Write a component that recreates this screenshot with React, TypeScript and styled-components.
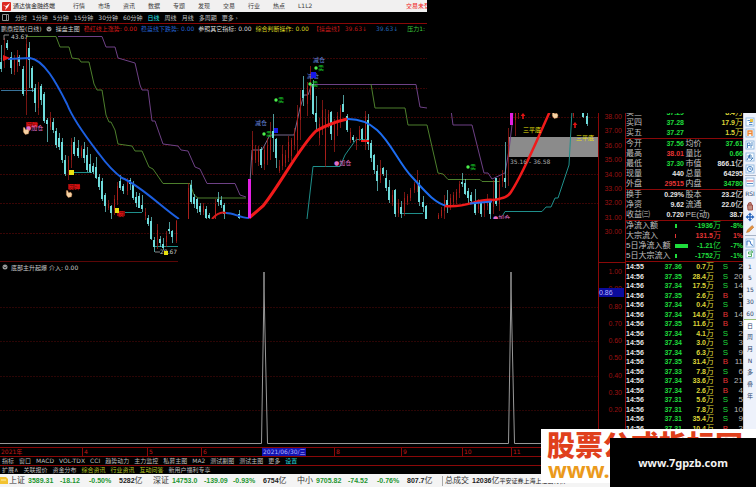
import React from 'react';
import styled, { createGlobalStyle, css } from 'styled-components';

const RED = '#e43434';
const GREEN = '#1fdc3c';
const LINE = '#8a0808';
const CJK = '"Noto Sans CJK SC", sans-serif';

const GlobalStyle = createGlobalStyle`
  * { box-sizing: border-box; }
  html, body { margin: 0; padding: 0; background: #000; }
  body { font-family: "DejaVu Sans", ${CJK}; font-size: 6px; color: #c8c8c8; }
  button, a { font: inherit; color: inherit; text-decoration: none; }
  button { background: none; border: 0; padding: 0; margin: 0; cursor: pointer; white-space: nowrap; }
  h1 { margin: 0; font: inherit; }
  svg { display: block; }
`;

const Page = styled.div`
  position: relative;
  min-height: 100vh;
  display: flex;
  flex-direction: column;
  overflow: hidden;
`;

const Workspace = styled.div`
  flex: 1;
  display: grid;
  grid-template-columns: minmax(0, 1fr) 118px 13px;
`;

const ChartColumn = styled.main`
  display: flex;
  flex-direction: column;
  min-width: 0;
`;

const TitleBar = styled.header`
  height: 12px;
  display: flex;
  align-items: center;
  background: #f1f0f0;
  color: #3c3c3c;
  padding-left: 2px;
  line-height: 12px;
  white-space: nowrap;
`;

const AppName = styled.h1`
  width: 58px;
  margin-left: 2px;
  color: #222;
`;

const Menu = styled.nav`
  display: grid;
  grid-template-columns: repeat(10, 25px);
  padding-left: 2px;
  width: 335px;
  justify-items: start;
`;

const Alert = styled.button`
  && { color: #f01818; }
`;

const PeriodBar = styled.nav`
  height: 12px;
  display: flex;
  align-items: center;
  gap: 5px;
  padding-left: 2px;
  border-bottom: 1px solid ${LINE};
  line-height: 11px;
  white-space: nowrap;
`;

const PeriodButton = styled.button<{ $active?: boolean }>`
  && { color: ${p => (p.$active ? '#25e6ee' : '#c2c2c2')}; }
`;

const Legend = styled.div<{ $tall?: boolean }>`
  height: ${p => (p.$tall ? 10 : 9)}px;
  display: flex;
  align-items: center;
  gap: ${p => (p.$tall ? 3 : 4)}px;
  padding-left: ${p => (p.$tall ? 2 : 1)}px;
  line-height: 9px;
  white-space: nowrap;
  overflow: hidden;
`;

const LegendItem = styled.span<{ $color?: string; $wide?: boolean }>`
  color: ${p => p.$color || '#c8c8c8'};
  padding-right: ${p => (p.$wide ? 5 : 0)}px;
`;

const PlotRow = styled.section`
  display: grid;
  grid-template-columns: minmax(0, 1fr) 27px;
`;

const IndicatorRow = styled(PlotRow)`
  flex: 1;
`;

const IndicatorPlot = styled.div`
  min-width: 0;
`;

const Axis = styled.div<{ $lower?: boolean }>`
  position: relative;
  display: flex;
  flex-direction: column;
  justify-content: space-between;
  align-items: flex-end;
  padding: ${p => (p.$lower ? '5px 3px 33px 0' : '80px 3px 26px 0')};
  border-left: 1px solid ${LINE};
  ${p => p.$lower && css`border-top: 1px solid ${LINE};`}
  font-family: "Liberation Sans", sans-serif;
  font-size: 7px;
  line-height: 8px;
  color: #9c1212;
`;

const AxisTag = styled.span`
  position: absolute;
  left: 0;
  right: 1px;
  top: 25px;
  height: 9px;
  line-height: 9px;
  background: #0b0b9c;
  color: #b8b8ff;
`;

const TimeAxis = styled.div`
  height: 9px;
  border-top: 1px solid ${LINE};
  display: grid;
  grid-template-columns: 82fr 65fr 54fr 61fr 72fr 67fr 61fr 49fr 114fr;
  line-height: 8px;
  color: #c41818;
  white-space: nowrap;
`;

const TimeMark = styled.span<{ $current?: boolean; $first?: boolean }>`
  justify-self: start;
  padding-left: 1px;
  ${p => !p.$current && !p.$first && css`border-left: 1px solid ${LINE};`}
  ${p => p.$current && css`background: #1212b0; color: #b4b4ff;`}
`;

const TabBar = styled.nav`
  height: 9px;
  display: flex;
  gap: 5px;
  padding-left: 2px;
  border-top: 1px solid ${LINE};
  line-height: 8px;
`;

const Tab = styled.button<{ $color?: string }>`
  && { color: ${p => p.$color || '#bdbdbd'}; line-height: 8px; }
`;

const QuotePanel = styled.aside`
  border-left: 1px solid ${LINE};
  padding-top: 108px;
  font-family: "Liberation Sans", ${CJK};
  font-size: 8px;
`;

const QuoteTable = styled.table<{ $ticks?: boolean }>`
  width: 100%;
  height: ${p => (p.$ticks ? '171px' : 'auto')};
  table-layout: fixed;
  border-collapse: collapse;
  border-bottom: ${p => (p.$ticks ? '0' : `1px solid ${LINE}`)};
  line-height: ${p => (p.$ticks ? 9 : 10)}px;
  white-space: nowrap;
  td, th { padding: 0; font-weight: normal; overflow: visible; }
`;

const Label = styled.th`
  text-align: left;
  color: #c0c0c0;
`;

const Value = styled.td<{ $color?: string; $left?: boolean }>`
  text-align: ${p => (p.$left ? 'left' : 'right')};
  color: ${p => p.$color || '#e4e4e4'};
`;

const Num = styled.b`
  font-size: 7px;
`;

const Col = styled.col<{ $w?: number }>`
  ${p => p.$w && css`width: ${p.$w}px;`}
`;

const FlowBar = styled.i<{ $w: number; $color: string }>`
  display: block;
  width: ${p => p.$w}px;
  height: 4px;
  background: ${p => p.$color};
`;

const ToolStrip = styled.nav`
  background: #eef2fb;
  border-left: 1px solid #c9d2e2;
  padding-top: 116px;
`;

const ToolList = styled.div`
  height: 285px;
  display: flex;
  flex-direction: column;
  justify-content: space-between;
`;

const Tool = styled.button<{ $active?: boolean }>`
  && {
    height: 11px;
    width: 100%;
    display: flex;
    align-items: center;
    justify-content: center;
    line-height: 11px;
    color: #2c466e;
    background: ${p => (p.$active ? '#fff' : 'transparent')};
    border-top: ${p => (p.$active ? '1px solid #9bc27a' : '0')};
  }
`;

const ToolDivider = styled.hr`
  width: 11px;
  margin: 0 auto;
  border: 0;
  border-top: 1px solid #a9b4c6;
`;

const StatusBar = styled.footer`
  height: 13px;
  display: flex;
  align-items: center;
  background: #f4f4f4;
  color: #333;
  font-family: "Liberation Sans", ${CJK};
  font-size: 8px;
  line-height: 12px;
  white-space: nowrap;
  overflow: hidden;
`;

const IndexGroup = styled.div<{ $w: number }>`
  width: ${p => p.$w}px;
  display: grid;
  grid-template-columns: 19px 32px 29px 30px 1fr;
  align-items: baseline;
  flex: none;
`;

const Figure = styled.b<{ $down?: boolean }>`
  font-size: 7px;
  color: ${p => (p.$down ? '#1d9430' : '#222')};
`;

const Turnover = styled.div`
  border-left: 1px solid #aaa;
  padding-left: 2px;
  display: flex;
  gap: 3px;
  line-height: 10px;
`;

const Broker = styled.span`
  font-size: 6px;
  color: #222;
`;

const BlankCover = styled.div`
  position: absolute;
  top: 0;
  right: 0;
  left: 427px;
  height: 113px;
  background: #000;
`;

const Promo = styled.div`
  position: absolute;
  right: 0;
  bottom: 4px;
  width: 215px;
  height: 54px;
  padding-left: 6px;
  background: #fff;
  white-space: nowrap;
`;

const PromoTitle = styled.div`
  font: 900 28px/30px ${CJK};
  color: #e0401c;
`;

const PromoLink = styled.a`
  && {
    display: block;
    padding-left: 1px;
    font: bold 22px/20px "Noto Sans", sans-serif;
    color: #eb9a1c;
  }
`;

const SiteBadge = styled.a`
  && {
    position: absolute;
    right: 0;
    bottom: 0;
    width: 146px;
    height: 49px;
    display: flex;
    align-items: center;
    justify-content: center;
    background: #000;
    color: #f2f2f2;
    font: bold 11px/16px "Noto Sans", sans-serif;
  }
`;

/* x, high, low, body top, body bottom, rising flag */
type Candle = [number, number, number, number, number, number];
const candles: Candle[] = [
  [1, 45, 72, 62, 69, 0], [4, 38, 68, 56, 60, 1], [7, 40, 50, 43, 48, 0], [11, 52, 74, 57, 68, 0], [14, 55, 75, 60, 72, 1],
  [17, 50, 72, 55, 66, 1], [19, 55, 66, 57, 62, 0], [23, 66, 96, 69, 94, 0], [26, 38, 115, 44, 95, 1], [29, 42, 88, 48, 60, 0],
  [32, 66, 92, 68, 88, 0], [35, 84, 112, 88, 103, 0], [38, 82, 115, 90, 108, 1], [41, 84, 105, 86, 100, 0], [44, 92, 123, 94, 121, 0],
  [47, 118, 142, 120, 124, 0], [50, 112, 130, 118, 127, 1], [53, 118, 133, 122, 130, 0], [56, 128, 148, 131, 145, 0], [59, 133, 150, 138, 147, 0],
  [62, 138, 163, 142, 160, 0], [65, 155, 176, 160, 174, 0], [68, 156, 180, 160, 170, 1], [71, 138, 168, 145, 160, 1], [74, 137, 156, 142, 154, 0],
  [78, 140, 158, 148, 156, 0], [81, 146, 158, 148, 156, 1], [84, 142, 163, 149, 158, 0], [87, 147, 172, 155, 170, 0], [90, 154, 173, 164, 172, 0],
  [93, 163, 174, 166, 172, 0], [96, 157, 179, 167, 178, 0], [99, 174, 190, 177, 187, 0], [102, 178, 201, 181, 199, 0], [105, 193, 212, 195, 206, 0],
  [108, 200, 210, 204, 208, 1], [111, 205, 219, 206, 213, 0], [114, 195, 215, 199, 210, 1], [117, 182, 205, 186, 200, 1], [120, 175, 190, 181, 188, 0],
  [123, 184, 194, 186, 191, 0], [127, 178, 195, 182, 191, 1], [130, 178, 190, 180, 184, 0], [133, 181, 200, 185, 198, 0], [136, 192, 207, 197, 203, 0],
  [139, 193, 208, 196, 208, 0], [142, 195, 212, 205, 209, 0], [145, 208, 220, 212, 216, 1], [148, 215, 226, 218, 224, 0], [151, 217, 240, 221, 239, 0],
  [154, 237, 252, 240, 247, 0], [157, 224, 249, 230, 240, 1], [160, 236, 247, 239, 243, 0], [163, 238, 250, 244, 248, 0], [166, 231, 247, 236, 242, 1],
  [169, 222, 234, 229, 231, 0], [172, 230, 243, 231, 237, 0], [176, 220, 243, 221, 241, 1],
  [188, 183, 219, 188, 219, 1], [191, 180, 204, 185, 202, 0], [194, 194, 208, 197, 204, 0], [197, 198, 213, 199, 209, 0], [200, 203, 215, 206, 212, 0],
  [203, 203, 215, 206, 212, 1], [206, 206, 219, 209, 218, 0], [209, 213, 219, 215, 218, 0], [215, 199, 219, 204, 219, 1], [218, 192, 206, 199, 202, 0],
  [221, 196, 208, 200, 205, 0], [224, 203, 219, 205, 214, 0], [239, 210, 219, 214, 218, 0],
  [252, 131, 175, 140, 160, 1], [255, 145, 163, 150, 160, 1], [258, 146, 166, 150, 162, 1], [261, 147, 168, 149, 165, 0], [264, 146, 170, 150, 164, 1],
  [267, 138, 165, 145, 160, 1], [270, 122, 160, 140, 150, 1], [273, 114, 152, 131, 138, 0], [276, 138, 168, 139, 158, 0], [279, 160, 173, 166, 171, 1],
  [282, 145, 170, 154, 166, 1], [285, 150, 167, 155, 163, 1], [288, 136, 162, 142, 158, 1], [291, 138, 161, 140, 156, 1], [294, 128, 150, 133, 145, 1],
  [297, 105, 155, 115, 140, 1], [300, 90, 140, 98, 120, 1], [303, 76, 106, 90, 98, 0], [307, 82, 116, 86, 104, 1], [310, 66, 100, 84, 95, 1],
  [313, 80, 115, 84, 114, 0], [316, 96, 132, 113, 122, 0], [319, 118, 145, 124, 138, 1], [322, 100, 135, 110, 130, 1], [325, 109, 167, 118, 160, 1],
  [328, 110, 128, 114, 124, 1], [331, 111, 140, 112, 134, 0], [334, 119, 152, 122, 140, 1], [337, 112, 136, 116, 130, 1], [340, 105, 128, 108, 122, 1],
  [343, 95, 112, 104, 112, 0], [347, 114, 132, 116, 130, 0], [350, 128, 143, 132, 140, 1], [353, 135, 142, 137, 140, 0], [356, 137, 150, 140, 143, 1],
  [359, 126, 141, 130, 139, 1], [362, 128, 140, 129, 139, 0], [365, 111, 150, 116, 142, 1], [368, 114, 150, 120, 144, 0], [371, 140, 162, 143, 158, 0],
  [374, 154, 174, 155, 170, 0], [377, 165, 191, 171, 181, 0], [380, 160, 183, 168, 180, 1], [383, 167, 176, 168, 174, 0], [386, 170, 191, 178, 188, 0],
  [389, 180, 203, 187, 200, 0], [392, 190, 206, 195, 202, 1], [395, 189, 217, 190, 214, 0], [398, 199, 217, 203, 213, 1], [401, 201, 218, 207, 214, 0],
  [404, 192, 216, 198, 212, 1], [407, 194, 205, 196, 202, 1], [410, 188, 201, 190, 198, 1], [414, 182, 193, 184, 190, 1], [417, 170, 192, 180, 185, 1],
  [419, 180, 206, 183, 202, 0], [423, 196, 212, 202, 207, 0], [426, 205, 219, 206, 219, 0],
  [438, 213, 219, 215, 219, 1], [441, 207, 218, 210, 216, 1], [444, 195, 219, 200, 211, 1], [447, 190, 213, 200, 207, 0], [450, 194, 210, 198, 205, 1],
  [453, 192, 205, 195, 202, 1], [456, 189, 204, 192, 200, 1], [459, 181, 198, 184, 193, 1], [462, 173, 187, 182, 184, 0], [465, 179, 195, 183, 194, 0],
  [468, 188, 204, 191, 198, 0], [471, 192, 204, 195, 201, 0], [475, 189, 215, 201, 213, 0], [478, 199, 213, 203, 209, 1], [481, 200, 217, 202, 214, 0],
  [484, 199, 217, 203, 210, 1], [487, 194, 210, 200, 206, 1], [490, 200, 219, 201, 214, 0], [493, 180, 214, 200, 207, 1], [496, 178, 206, 178, 204, 0],
  [499, 178, 211, 184, 204, 1], [502, 170, 187, 174, 181, 1], [505, 142, 188, 178, 182, 0], [508, 128, 186, 137, 157, 1],
  [515, 108, 136, 110, 120, 1], [518, 108, 119, 110, 114, 1], [583, 108, 118, 110, 117, 0], [587, 108, 126, 116, 124, 0], [573, 108, 118, 110, 116, 1],
];

const Candles = () => (
  <>
    {candles.map(([x, h, l, t, b, up]) => (
      <g key={x} fill={up ? '#a81e1a' : '#6fdcdc'}>
        <rect x={x} y={h} width={1} height={l - h} opacity={0.7} />
        <rect x={up ? x : x - 1} y={t} width={up ? 1 : 2} height={b - t} />
      </g>
    ))}
  </>
);

const Note = styled.text`
  font-family: "DejaVu Sans", ${CJK};
  font-size: 6px;
`;

const SellMark = ({ x, y }: { x: number; y: number }) => (
  <g fill="#18c828">
    <circle cx={x + 2} cy={y} r={1.7} fill="#4cf04c" />
    <Note x={x + 4} y={y + 2}>卖</Note>
  </g>
);

const Hand = ({ x, y }: { x: number; y: number }) => (
  <path
    transform={`translate(${x} ${y})`}
    d="M-2.6 -3.4 L-1.4 -3.4 L-.4 -1.2 L1.8 -1.8 L3 0 L2.4 2.8 L-.8 3.4 L-2.6 1 Z"
    fill="#f6d2a4"
    stroke="#d98a4e"
    strokeWidth={0.4}
  />
);

const RedArrow = ({ x, y }: { x: number; y: number }) => (
  <path d={`M${x} ${y - 3} l2.4 3 h-1.6 v3 h-1.6 v-3 h-1.6 Z`} fill="#e01414" />
);

const MainChart = () => (
  <svg width="100%" height="229" viewBox="0 33 598 229" preserveAspectRatio="xMinYMin meet" role="img" aria-label="操盘主图">
    <defs>
      <clipPath id="plot"><path d="M0 33 H598 V219 H178 V262 H0 Z" /></clipPath>
    </defs>
    <g clipPath="url(#plot)" fill="none">
      <path d="M0 58.5H598 M0 88.5H598 M0 117.5H598 M0 145.5H598 M0 174.5H598 M0 203.5H598 M0 233.5H178" stroke="#3a0505" strokeDasharray="2 1" />
      <path d="M509 137 H598 V157 H509 Z" fill="#8b8b8b" />
      <path d="M26 36.5 H56 L60 47 H69 L72 58 L79 59 L81 62 H89 L94 84 L97 90 H102 L106 115 L109 122 H111 L115 130 L118 144 L132 146 L135 151 H142 L149 167 L153 169 L163 183.5 H190 L194 195 L198 198 H246" stroke="#4d7f2c" />
      <path d="M58 36.5 H102 L106 47 H115 L118 58 L135 63 L140 85 L142 90 H148 L152 121 H155 L163 144 L178 146 L181 150 L188 151 L195 167 L200 169 L207 183.5 H235 L240 195 L246 197" stroke="#6e4186" />
      <path d="M249 198 L252 150 H262 L270 135 H294 L300 108 L304 95 H308 L312 84" stroke="#77688c" />
      <path d="M312 84.5 H416 L420 107 L427 108 M451 110 L453 125 H472 L484 173 H488 L492 179 L505 173 L509 150 L512 125 L513 110" stroke="#6e4186" />
      <path d="M371 84 L375 108 H405 L408 125 H427 L438 173 L443 174 L448 179.5 H480 L482 181.5 H500" stroke="#4d7f2c" />
      <path d="M72 172.5 H92 M115 212.5 H142 M154 246.5 H178 M307 219 L313 166.5 H340 L345 155 L356 139.5 H367 M400 213.5 H423 M503 215 L505 211.5 H542 L546 207 H551 L555 198 H558 L569 165 L572 110" stroke="#1f8f8b" />
      <path d="M1 90.5 H34" stroke="#39739a" />
      <Candles />
      <path d="M8 59 L30 58 C44 60 56 82 67 104 C74 122 90 142 100 155 C108 166 114 172 122 178 C140 185 160 206 179 219" stroke="#1c5fe0" strokeWidth={2} />
      <path d="M212 219 Q219 211 226 213" stroke="#d81c1c" strokeWidth={2} />
      <path d="M226 213 C234 213 240 218 249 218" stroke="#1c5fe0" strokeWidth={2} />
      <path d="M249 218 L263 206 C280 185 300 146 316 131 Q330 123 347 119" stroke="#f01a1a" strokeWidth={3} />
      <path d="M347 119 C384 118 392 156 412 177 C424 190 434 203 447 206" stroke="#1c6cf0" strokeWidth={2} />
      <path d="M445 206 C470 208 476 198 494 200 C504 198 508 197 511 192 C524 172 536 142 551 109" stroke="#f01a1a" strokeWidth={2.5} />
      <path d="M470 203.5 L492 201.5" stroke="#2a6df0" strokeWidth={2} />
      <path d="M249.5 179 V218 M511.5 110 V125" stroke="#e320e3" strokeWidth={3} />
      <path d="M361 141 H369" stroke="#f01a1a" strokeWidth={2} />
      <path d="M3 55 L10 58 L3 61 Z" fill="#e81818" />
      <path d="M4 40 V35 H9 M155 252 H160" stroke="#a8a8a8" strokeWidth={0.8} />
    </g>
    <g fill="#c4c4c4">
      <Note x={11} y={39}>43.67</Note>
      <Note x={160} y={254}>28.67</Note>
      <Note x={510} y={164} fill="#a8a8a8">35.16 - 36.58</Note>
    </g>
    <g fill="#6484dc">
      <Note x={313} y={62}>减仓</Note>
      <Note x={307} y={78}>减仓</Note>
      <Note x={255} y={125}>减仓</Note>
    </g>
    <path d="M311 72 h5 v6 h-5 Z M274 128 h4 v5 h-4 Z" fill="#1818e8" />
    <SellMark x={314} y={68} />
    <SellMark x={308} y={84} />
    <SellMark x={274} y={100} />
    <SellMark x={262} y={134} />
    <SellMark x={466} y={167} />
    <path d="M26 122 h11 v5 h-11 Z M68 184 h12 v5 h-12 Z M117 211 h8 v5 h-8 Z" fill="#8c0a0a" />
    <g fill="#f01414">
      <Note x={26} y={127}>反弹</Note>
      <Note x={68} y={189}>反弹</Note>
      <Note x={118} y={216}>反</Note>
    </g>
    <g fill="#e070c8">
      <Note x={26} y={130}>●加仓</Note>
      <Note x={334} y={165}>●加仓</Note>
      <Note x={493} y={220} clipPath="url(#plot)">●加仓</Note>
    </g>
    <g fill="#e8e010">
      <Note x={523} y={132}>三平底</Note>
      <Note x={576} y={140}>三平底</Note>
      <path d="M69 170 h5 v5 h-5 Z M115 208 h4 v5 h-4 Z M164 251 h4 v4 h-4 Z" />
    </g>
    <Hand x={26} y={131} />
    <Hand x={69} y={194} />
    <Hand x={555} y={115} />
    <RedArrow x={523} y={116} />
    <RedArrow x={575} y={125} />
    <path d="M0 261.5 H178" stroke="#5c0707" />
  </svg>
);

const IndicatorChart = () => (
  <svg width="100%" height="175" viewBox="0 272 598 175" preserveAspectRatio="xMinYMin meet" role="img" aria-label="底部主升起爆">
    <g fill="none">
      <path d="M0 307.5H598 M0 341.5H598 M0 376.5H598 M0 410.5H598" stroke="#2c0505" strokeDasharray="2 1" />
      <path d="M0 443.5 H261.5 L264 287 V272 V287 L267.5 443.5 H508.5 L511 287 V272 V287 L514.5 443.5 H598" stroke="#989898" />
    </g>
  </svg>
);

const Target = () => (
  <svg width="6" height="6" viewBox="0 0 6 6" aria-hidden="true">
    <circle cx="3" cy="3" r="2.5" fill="#9a9a9a" />
    <path d="M1.6 2.6 L3 4 L4.4 2.6" fill="none" stroke="#222" strokeWidth="0.8" />
  </svg>
);

const Icon = ({ children, boxed }: { children: React.ReactNode; boxed?: boolean }) => (
  <svg width="10" height="10" viewBox="0 0 10 10" fill="none" stroke="#4b83c4" strokeWidth="0.9" aria-hidden="true">
    {boxed && <rect x="1" y="1" width="8" height="8" fill="#fafdff" stroke="#8fb6de" />}
    {children}
  </svg>
);

const tools: { name: string; icon: React.ReactNode; end?: boolean }[] = [
  { name: '报价', icon: <Icon boxed><path d="M2.5 3.5 H5 M4 5.5 H7.5 M4 7.5 H7.5" /><path d="M5 2 H8 V5 H5Z" fill="#e9c344" stroke="none" /></Icon> },
  { name: '分时图', icon: <Icon boxed><path d="M3 8 V3 H7 V8 M3 5.5 H7" stroke="#ef8432" strokeWidth="1.3" /></Icon> },
  { name: '资讯', icon: <Icon boxed><path d="M2.5 8 V3 H5 V5.5 H2.5 M6 8 V5 H8 M6 3 H8" /></Icon> },
  { name: '画图', icon: <Icon boxed><path d="M2 8 L5 2.5 L4 6 H8 L5.5 8.5 M2.5 4 H7" stroke="#2f6fb2" /></Icon> },
  { name: '时钟', icon: <Icon boxed><circle cx="5" cy="5" r="2.6" /><path d="M5 3.5 V5.2 H6.5" /></Icon>, end: true },
  { name: '区间', icon: <Icon boxed><path d="M1.5 4 H8.5" stroke="#de4f5c" /><path d="M2 6.5 H8" /></Icon> },
  { name: '指标', icon: 'RSI' },
  { name: '锁定', icon: <Icon><path d="M3 4 Q3 1 6 1.5 L6.5 4 M2.5 4 H7.5 V9 H3 Z" fill="#c48d80" stroke="#98453c" /></Icon> },
  { name: '移动', icon: <Icon><path d="M5 .5 L7 3 H5.7 V4.3 H7 V3 L9.5 5 L7 7 V5.7 H5.7 V7 H7 L5 9.5 L3 7 H4.3 V5.7 H3 V7 L.5 5 L3 3 V4.3 H4.3 V3 H3 Z" fill="#2765bd" stroke="none" /></Icon> },
  { name: '画笔', icon: <Icon><path d="M1.5 8.5 L2.5 6 L7 1.5 L8.8 3.2 L4.2 7.8 Z" fill="#e6923c" stroke="#a9642a" strokeWidth="0.5" /></Icon>, end: true },
  { name: '叠加', icon: <Icon boxed><path d="M2 7.5 V3 H5 Q5.5 7.5 8 7.5" stroke="#2d69bc" /></Icon> },
  { name: '切换', icon: <Icon boxed><path d="M7 3 H3.5 V5 H6.5 V7.5 H3 M6 1.5 L8 3 L6 4.5" stroke="#44a958" /></Icon> },
  ...['1', '5', '15', '30', '60', '日', '周', '月', 'N', '多', '叠', '年'].map(n => ({ name: n, icon: n })),
];

const bids = [['买三', '37.29', '8.4'], ['买四', '37.28', '17.9'], ['买五', '37.27', '1.5']];

const quotes: [string, string, string, string, string, string, string?][] = [
  ['今开', '37.56', GREEN, '均价', '37.61', GREEN],
  ['最高', '38.01', RED, '量比', '0.66', GREEN],
  ['最低', '37.30', GREEN, '市值', '866.1', '', '亿'],
  ['现量', '440', '', '总量', '64295', ''],
  ['外盘', '29515', RED, '内盘', '34780', GREEN],
];
const basics: typeof quotes = [
  ['换手', '0.29%', '', '股本', '23.2', '', '亿'],
  ['净资', '9.62', '', '流通', '22.0', '', '亿'],
  ['收益㈢', '0.720', '', 'PE(动)', '38.7', ''],
];
const flows: [string, number, string, string, string, string][] = [
  ['净流入额', 2, '-1936', '万', '-8%', GREEN],
  ['大宗流入', 1, '131.5', '万', '1%', RED],
  ['5日净流入额', 13, '-1.21', '亿', '-7%', GREEN],
  ['5日大宗流入', 2, '-1752', '万', '-1%', GREEN],
];
const ticks = [
  ['37.36', '0.7', 'S', '2'], ['37.35', '28.4', 'S', '20'], ['37.34', '17.5', 'S', '14'], ['37.35', '2.6', 'B', '5'],
  ['37.34', '0.4', 'S', '1'], ['37.34', '14.6', 'B', '14'], ['37.35', '11.6', 'B', '3'], ['37.34', '4.1', 'S', '2'],
  ['37.34', '3.0', 'S', '3'], ['37.34', '6.3', 'S', '9'], ['37.35', '31.4', 'B', '11'], ['37.33', '7.8', 'S', '6'],
  ['37.34', '33.6', 'B', '21'], ['37.34', '2.6', 'B', '4'], ['37.31', '5.6', 'S', '5'], ['37.31', '7.8', 'S', '10'],
  ['37.31', '35.4', 'S', '9'], ['37.31', '10.4', 'B', '3'],
];

const PairTable = ({ rows }: { rows: typeof quotes }) => (
  <QuoteTable>
    <colgroup><Col $w={24} /><Col $w={34} /><Col $w={19} /><Col /></colgroup>
    <tbody>
      {rows.map(([a, av, ac, b, bv, bc, unit]) => (
        <tr key={a}>
          <Label>{a}</Label>
          <Value $color={ac}><Num>{av}</Num></Value>
          <Label>&thinsp;{b}</Label>
          <Value $color={bc}><Num>{bv}</Num>{unit}</Value>
        </tr>
      ))}
    </tbody>
  </QuoteTable>
);

const indices = [
  { name: '上证', w: 144, v: ['3589.31', '-18.12', '-0.50%', '5282'] },
  { name: '深证', w: 144, v: ['14753.0', '-139.09', '-0.93%', '6754'] },
  { name: '中小', w: 145, v: ['9705.82', '-74.52', '-0.76%', '807.7'] },
];

export default function App() {
  return (
    <>
      <GlobalStyle />
      <Page>
        <Workspace>
          <ChartColumn>
            <TitleBar>
              <svg width="9" height="9" viewBox="0 0 9 9" aria-hidden="true">
                <rect width="9" height="9" rx="1" fill="#dc2a22" />
                <path d="M1 3 L4 4 L8 1 L6 5 L3 8 L4 5 Z" fill="#fff" />
              </svg>
              <AppName>通达信金融终端</AppName>
              <Menu>
                {['行情', '市场', '资讯', '数据', '专题', '发现', '交易', '行业', '热点', 'L1L2'].map(m => (
                  <button key={m}>{m}</button>
                ))}
              </Menu>
              <Alert>交易未登录</Alert>
            </TitleBar>
            <PeriodBar>
              <svg width="8" height="7" viewBox="0 0 8 7" fill="none" stroke="#8c8c8c" aria-hidden="true">
                <path d="M.5 .5 H6.5 V6.5 H.5 Z M4.5 1 V6" />
              </svg>
              {['分时', '1分钟', '5分钟', '15分钟', '30分钟', '60分钟', '日线', '周线', '月线', '多周期', '更多 ›'].map(p => (
                <PeriodButton key={p} $active={p === '日线'}>{p}</PeriodButton>
              ))}
            </PeriodBar>
            <Legend>
              <LegendItem>鹏鼎控股(日线)</LegendItem>
              <Target />
              <LegendItem>操盘主图</LegendItem>
              <LegendItem $color="#d81818">稳红线上涨势: 0.00</LegendItem>
              <LegendItem $color="#2462d0">稳蓝线下跌势: 0.00</LegendItem>
              <LegendItem $color="#dcdcdc">参照其它指标: 0.00</LegendItem>
              <LegendItem $color="#dcd420">综合判断操作: 0.00</LegendItem>
              <LegendItem $color="#b81818" $wide>【操盘线】 39.63↓</LegendItem>
              <LegendItem $color="#2462b0" $wide>39.63↓</LegendItem>
              <LegendItem $color="#3cc83c">压力1: 41.20</LegendItem>
            </Legend>
            <PlotRow>
              <MainChart />
              <Axis>
                {[38, 37, 36, 35, 34, 33, 32, 31, 30].map(n => <span key={n}>{n}.00</span>)}
              </Axis>
            </PlotRow>
            <IndicatorRow>
              <IndicatorPlot>
                <Legend $tall>
                  <Target />
                  <LegendItem>底部主升起爆 介入: 0.00</LegendItem>
                </Legend>
                <IndicatorChart />
              </IndicatorPlot>
              <Axis $lower>
                {['1.00', '0.90', '0.80', '0.70', '0.60', '0.50', '0.40', '0.30', '0.20'].map(n => <span key={n}>{n}</span>)}
                <AxisTag>0.86</AxisTag>
              </Axis>
            </IndicatorRow>
            <TimeAxis>
              <TimeMark $first>2021年</TimeMark>
              {['4', '5', '6'].map(m => <TimeMark key={m}>{m}</TimeMark>)}
              <TimeMark $current>2021/06/30/三</TimeMark>
              {['8', '9', '10', '11'].map(m => <TimeMark key={m}>{m}</TimeMark>)}
            </TimeAxis>
            <TabBar>
              {['指标', '窗口', 'MACD', 'VOL-TDX', 'CCI', '趋势动力', '主力监控', '私募主图', 'MA2', '测试副图', '测试主图', '更多'].map(t => (
                <Tab key={t}>{t}</Tab>
              ))}
              <Tab $color="#28d8dc">设置</Tab>
            </TabBar>
            <TabBar>
              {['扩展∧', '关联报价', '资金分布'].map(t => <Tab key={t}>{t}</Tab>)}
              {['综合资讯', '行业资讯', '互动问答'].map(t => <Tab key={t} $color="#b4c424">{t}</Tab>)}
              <Tab>新用户福利专享</Tab>
            </TabBar>
          </ChartColumn>

          <QuotePanel>
            <QuoteTable>
              <colgroup><Col $w={24} /><Col $w={34} /><Col /></colgroup>
              <tbody>
                {bids.map(([n, p, v]) => (
                  <tr key={n}>
                    <Label>{n}</Label>
                    <Value $color={GREEN}><Num>{p}</Num></Value>
                    <Value $color="#dcd438"><Num>{v}</Num>万</Value>
                  </tr>
                ))}
              </tbody>
            </QuoteTable>
            <PairTable rows={quotes} />
            <PairTable rows={basics} />
            <QuoteTable>
              <colgroup><Col $w={49} /><Col $w={13} /><Col $w={33} /><Col /></colgroup>
              <tbody>
                {flows.map(([n, w, v, unit, pct, color]) => (
                  <tr key={n}>
                    <Label>{n}</Label>
                    <td><FlowBar $w={w} $color={color} /></td>
                    <Value $color={color}><Num>{v}</Num>{unit}</Value>
                    <Value $color={color}><Num>{pct}</Num></Value>
                  </tr>
                ))}
              </tbody>
            </QuoteTable>
            <QuoteTable $ticks>
              <colgroup><Col $w={24} /><Col $w={32} /><Col $w={32} /><Col $w={14} /><Col /></colgroup>
              <tbody>
                {ticks.map(([p, v, side, n], i) => (
                  <tr key={i}>
                    <Value $left><Num>{i ? '14:56' : '14:55'}</Num></Value>
                    <Value $color={GREEN}><Num>{p}</Num></Value>
                    <Value $color="#dcd438"><Num>{v}</Num>万</Value>
                    <Value $color={side === 'S' ? GREEN : RED}>{side}</Value>
                    <Value $color="#b8b8b8">{n}</Value>
                  </tr>
                ))}
              </tbody>
            </QuoteTable>
          </QuotePanel>

          <ToolStrip>
            <ToolList>
              {tools.map(t => (
                <React.Fragment key={t.name}>
                  <Tool aria-label={t.name} $active={t.name === '日'}>{t.icon}</Tool>
                  {t.end && <ToolDivider />}
                </React.Fragment>
              ))}
            </ToolList>
          </ToolStrip>
        </Workspace>

        <StatusBar>
          <svg width="9" height="9" viewBox="0 0 9 9" aria-hidden="true">
            <path d="M0 1 H6 L8 3 V8 H0 Z" fill="#f2c230" />
            <path d="M1 4 H6" stroke="#fff0a8" />
          </svg>
          {indices.map(({ name, w, v }) => (
            <IndexGroup key={name} $w={w}>
              <span>{name}</span>
              <Figure $down>{v[0]}</Figure>
              <Figure $down>{v[1]}</Figure>
              <Figure $down>{v[2]}</Figure>
              <span><Figure>{v[3]}</Figure>亿</span>
            </IndexGroup>
          ))}
          <Turnover>
            <span>总成交</span>
            <span><Figure>12036</Figure>亿</span>
          </Turnover>
          <Broker>平安证券上海上证云行情</Broker>
        </StatusBar>

        <BlankCover />
        <Promo>
          <PromoTitle>股票公式指标网</PromoTitle>
          <PromoLink href="#">www.</PromoLink>
        </Promo>
        <SiteBadge href="#">www.7gpzb.com</SiteBadge>
      </Page>
    </>
  );
}
